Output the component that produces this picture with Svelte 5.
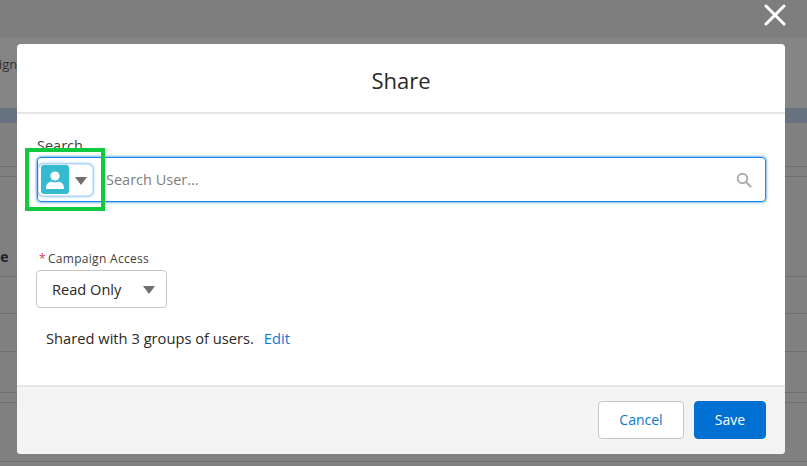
<script>
  let query = "";
  let access = "Read Only";
</script>

<div class="page">
  <div class="backdrop">
    <div class="topbar"></div>
    <div class="tabs"><span class="crumb">ign</span></div>
    <div class="band"></div>
    <div class="row r1"></div>
    <div class="row r2"></div>
    <div class="row r3"><span class="cell">ne</span></div>
    <div class="row r4"></div>
    <div class="row r5"></div>
    <div class="row r6"></div>
    <div class="row r7"></div>
    <div class="row r8"></div>
  </div>

  <button class="close" aria-label="Close">
    <svg width="22" height="22" viewBox="0 0 22 22"><path d="M2 2 L20 20 M20 2 L2 20" stroke="#fff" stroke-width="3" stroke-linecap="round" fill="none" /></svg>
  </button>

  <div class="modal">
    <header class="head">Share</header>
    <div class="body">
      <div class="search-label">Search</div>
      <div class="search">
        <button class="scope">
          <span class="avatar">
            <svg width="20" height="20" viewBox="0 0 20 20"><circle cx="10" cy="6" r="4.6" fill="#fff" /><path d="M1 18 C1 13.5 4 12 6.5 11.4 C8 12.6 12 12.6 13.5 11.4 C16 12 19 13.5 19 18 C19 18.6 18.6 19 18 19 L2 19 C1.4 19 1 18.6 1 18Z" fill="#fff" /></svg>
          </span>
          <span class="caret"></span>
        </button>
        <input class="input" placeholder="Search User..." bind:value={query} />
        <svg class="glass" width="16" height="16" viewBox="0 0 16 16"><circle cx="6.5" cy="6.5" r="4.8" stroke="#b0adab" stroke-width="2" fill="none" /><path d="M10 10 L14.5 14.5" stroke="#b0adab" stroke-width="2.2" stroke-linecap="round" /></svg>
      </div>
      <div class="access-label"><abbr>*</abbr>Campaign Access</div>
      <button class="select"><span>{access}</span><span class="caret"></span></button>
      <p class="shared">Shared with 3 groups of users. <a href="#edit">Edit</a></p>
    </div>
    <footer class="foot">
      <button class="btn neutral">Cancel</button>
      <button class="btn brand">Save</button>
    </footer>
    <div class="highlight"></div>
  </div>
</div>

<style>
  :global(body) {
    margin: 0;
  }
  .page {
    position: relative;
    width: 807px;
    height: 466px;
    overflow: hidden;
    font-family: "Open Sans", "Noto Sans", sans-serif;
    color: #2b2826;
  }
  .backdrop {
    height: 100%;
    background: #808080;
  }
  .topbar {
    height: 37px;
    background: #7e7e7e;
  }
  .tabs {
    height: 71px;
    box-sizing: border-box;
    background: #858585;
    padding-top: 18px;
  }
  .crumb {
    display: block;
    margin-left: -1px;
    font-size: 13px;
    color: #30303c;
  }
  .band {
    height: 15px;
    background: #66727f;
  }
  .row {
    box-sizing: border-box;
    border-bottom: 1px solid #6e6e6e;
  }
  .r1 { height: 44px; }
  .r2 { height: 10px; }
  .r3 { height: 100px; padding-top: 70px; }
  .r4 { height: 37px; }
  .r5 { height: 38px; }
  .r6 { height: 41px; }
  .r7 { height: 10px; }
  .r8 { height: 59px; }
  .cell {
    display: block;
    margin-left: -9px;
    font-size: 14px;
    font-weight: 700;
    color: #20202a;
  }
  .close {
    position: absolute;
    left: 764px;
    top: 4px;
    width: 22px;
    height: 22px;
    padding: 0;
    border: none;
    background: none;
    display: flex;
  }
  .modal {
    position: absolute;
    left: 17px;
    top: 44px;
    width: 768px;
    height: 410px;
    background: #fff;
    border-radius: 4px;
    display: flex;
    flex-direction: column;
    overflow: hidden;
  }
  .head {
    height: 68px;
    box-sizing: border-box;
    flex: none;
    padding-top: 3px;
    border-bottom: 2px solid #e5e5e5;
    height: 70px;
    display: flex;
    align-items: center;
    justify-content: center;
    font-size: 22px;
    color: #2b2826;
  }
  .body {
    flex: 1;
    padding: 23px 19px 0 20px;
  }
  .search-label {
    font-size: 14.5px;
    line-height: 18px;
    color: #3e3e3c;
    height: 18px;
  }
  .search {
    position: relative;
    box-sizing: border-box;
    height: 45px;
    margin-top: 2px;
    border: 1px solid #1589ee;
    border-radius: 4px;
    box-shadow: 0 0 3px #0070d2;
    display: flex;
    align-items: center;
    padding-left: 0;
  }
  .scope {
    box-sizing: border-box;
    width: 55px;
    height: 32px;
    padding: 0 0 0 2px;
    border: 1px solid #d8e8f8;
    border-radius: 5px;
    background: #fff;
    box-shadow: 0 0 3px #1589ee;
    display: flex;
    align-items: center;
    gap: 6px;
  }
  .avatar {
    width: 28px;
    height: 29px;
    background: #35bbd0;
    border-radius: 3px;
    display: flex;
    align-items: center;
    justify-content: center;
  }
  .caret {
    width: 0;
    height: 0;
    border-left: 6.5px solid transparent;
    border-right: 6.5px solid transparent;
    border-top: 8px solid #706e6b;
    margin-top: 3px;
  }
  .input {
    flex: 1;
    border: none;
    outline: none;
    padding: 0 0 0 13px;
    height: 30px;
    font: inherit;
    font-size: 14.5px;
    background: transparent;
  }
  .input::placeholder {
    color: #7f7d7b;
    opacity: 1;
  }
  .glass {
    margin: 0 13px 0 8px;
  }
  .access-label {
    margin-top: 48px;
    margin-left: 2px;
    font-size: 12px;
    line-height: 18px;
    letter-spacing: 0.3px;
    color: #3e3e3c;
  }
  .access-label abbr {
    color: #e03050;
    margin-right: 2px;
  }
  .select {
    box-sizing: border-box;
    width: 131px;
    height: 38px;
    margin: 2px 0 0 -1px;
    padding: 0 11px 0 15px;
    border: 1px solid #c9c7c5;
    border-radius: 4px;
    background: #fff;
    display: flex;
    align-items: center;
    justify-content: space-between;
    font: inherit;
    font-size: 14.6px;
    color: #2b2826;
  }
  .select .caret {
    margin-top: 1px;
  }
  .shared {
    margin: 20px 0 0 9px;
    font-size: 14.7px;
    line-height: 20px;
    color: #2b2826;
  }
  .shared a {
    margin-left: 6px;
    color: #0a78d1;
    text-decoration: none;
  }
  .foot {
    box-sizing: border-box;
    height: 69px;
    flex: none;
    background: #f3f3f3;
    border-top: 2px solid #e5e5e5;
    display: flex;
    justify-content: flex-end;
    align-items: center;
    gap: 10px;
    padding: 0 19px 2px 0;
  }
  .btn {
    box-sizing: border-box;
    height: 38px;
    border-radius: 4px;
    font: inherit;
    font-size: 14px;
    padding: 0;
  }
  .neutral {
    width: 86px;
    background: #fff;
    border: 1px solid #c9c7c5;
    color: #0a78d1;
  }
  .brand {
    width: 72px;
    background: #0070d2;
    border: 1px solid #0070d2;
    color: #fff;
  }
  .highlight {
    position: absolute;
    left: 8px;
    top: 104px;
    width: 80px;
    height: 63px;
    box-sizing: border-box;
    border: 4px solid #10c93c;
    pointer-events: none;
  }
</style>
